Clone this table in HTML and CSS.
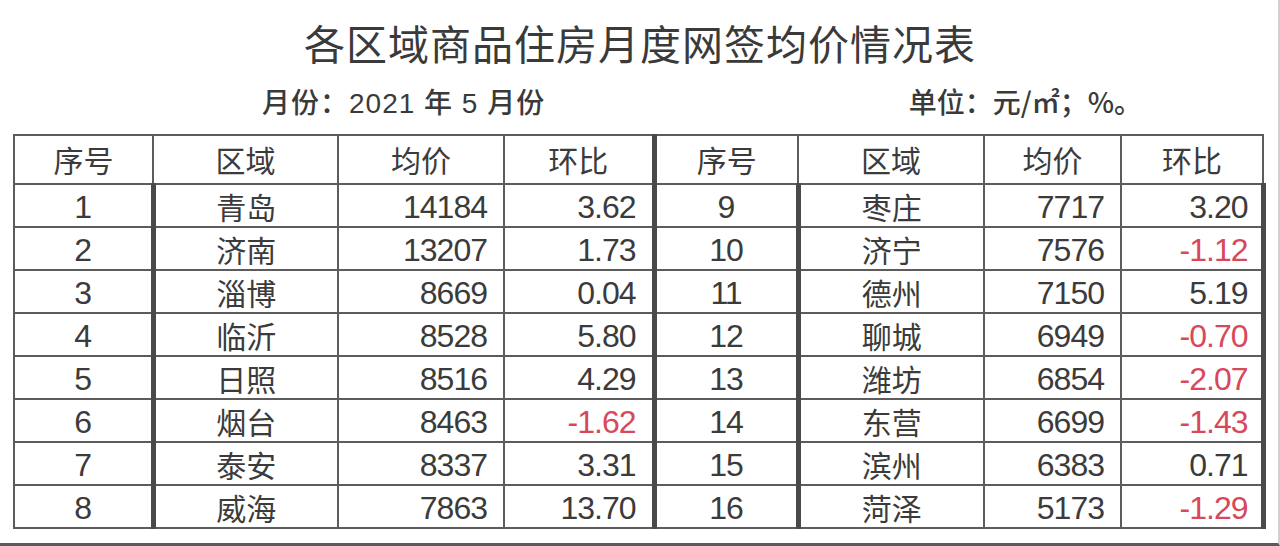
FILE: index.html
```html
<!DOCTYPE html>
<html lang="zh-CN">
<head>
<meta charset="utf-8">
<title>各区域商品住房月度网签均价情况表</title>
<link rel="stylesheet" href="styles.css">
</head>
<body>
<div class="page">
  <h1 class="title">各区域商品住房月度网签均价情况表</h1>
  <div class="meta">
    <span class="meta-left">月份：2021 年 5 月份</span>
    <span class="meta-right">单位：元/㎡；%。</span>
  </div>
  <table class="grid">
    <colgroup>
      <col class="c1"><col class="c2"><col class="c3"><col class="c4">
      <col class="c5"><col class="c6"><col class="c7"><col class="c8">
    </colgroup>
    <thead>
      <tr>
        <th>序号</th><th>区域</th><th>均价</th><th>环比</th>
        <th class="half">序号</th><th>区域</th><th>均价</th><th class="last">环比</th>
      </tr>
    </thead>
    <tbody>
      <tr><td class="no">1</td><td class="area">青岛</td><td class="num">14184</td><td class="num">3.62</td><td class="no half">9</td><td class="area">枣庄</td><td class="num">7717</td><td class="num last">3.20</td></tr>
      <tr><td class="no">2</td><td class="area">济南</td><td class="num">13207</td><td class="num">1.73</td><td class="no half">10</td><td class="area">济宁</td><td class="num">7576</td><td class="num last neg">-1.12</td></tr>
      <tr><td class="no">3</td><td class="area">淄博</td><td class="num">8669</td><td class="num">0.04</td><td class="no half">11</td><td class="area">德州</td><td class="num">7150</td><td class="num last">5.19</td></tr>
      <tr><td class="no">4</td><td class="area">临沂</td><td class="num">8528</td><td class="num">5.80</td><td class="no half">12</td><td class="area">聊城</td><td class="num">6949</td><td class="num last neg">-0.70</td></tr>
      <tr><td class="no">5</td><td class="area">日照</td><td class="num">8516</td><td class="num">4.29</td><td class="no half">13</td><td class="area">潍坊</td><td class="num">6854</td><td class="num last neg">-2.07</td></tr>
      <tr><td class="no">6</td><td class="area">烟台</td><td class="num">8463</td><td class="num neg">-1.62</td><td class="no half">14</td><td class="area">东营</td><td class="num">6699</td><td class="num last neg">-1.43</td></tr>
      <tr><td class="no">7</td><td class="area">泰安</td><td class="num">8337</td><td class="num">3.31</td><td class="no half">15</td><td class="area">滨州</td><td class="num">6383</td><td class="num last">0.71</td></tr>
      <tr><td class="no">8</td><td class="area">威海</td><td class="num">7863</td><td class="num">13.70</td><td class="no half">16</td><td class="area">菏泽</td><td class="num">5173</td><td class="num last neg">-1.29</td></tr>
    </tbody>
  </table>
</div>
</body>
</html>
```

FILE: styles.css
```css
html, body {
  margin: 0;
  padding: 0;
  background: #ffffff;
}

.page {
  box-sizing: border-box;
  width: 1280px;
  height: 546px;
  padding: 0 0 0 13px;
  border-right: 2px solid #d0d0d0;
  border-bottom: 3px solid #5a5a5a;
  color: #3b3b3b;
  font-family: "Noto Sans CJK SC", "Liberation Sans", sans-serif;
  overflow: hidden;
}

.title {
  margin: 0;
  padding: 16px 0 0 0;
  height: 52px;
  width: 1254px;
  text-align: center;
  font-size: 41px;
  line-height: 52px;
  font-weight: normal;
  color: #3a3a3a;
  letter-spacing: 1px;
}

.meta {
  display: flex;
  justify-content: space-between;
  height: 66px;
  align-items: center;
  font-size: 28px;
  color: #3a3a3a;
  font-weight: 500;
}

.meta-left {
  padding-left: 249px;
  font-family: "Liberation Sans", "Noto Sans CJK SC", sans-serif;
  letter-spacing: 1px;
}

.meta-right {
  padding-right: 136px;
}

.grid {
  border-collapse: collapse;
  table-layout: fixed;
  width: 1249px;
}

.c1 { width: 139px; }
.c2 { width: 185px; }
.c3 { width: 166px; }
.c4 { width: 150px; }
.c5 { width: 144px; }
.c6 { width: 186px; }
.c7 { width: 137px; }
.c8 { width: 142px; }

.grid th,
.grid td {
  border: 2px solid #5c5c5c;
  padding: 0;
  color: #3b3b3b;
}

.grid th {
  height: 45px;
  font-size: 30px;
  font-weight: normal;
  text-align: center;
  vertical-align: middle;
  line-height: 1;
  padding-top: 0;
  padding-bottom: 2px;
}

.grid td {
  height: 38px;
  line-height: 1;
  vertical-align: middle;
  padding-top: 3px;
}

.grid td.no {
  text-align: center;
  font-family: "Liberation Sans", sans-serif;
  font-size: 32px;
  letter-spacing: -1px;
}

.grid td.area {
  text-align: center;
  font-size: 30px;
  padding-top: 0;
  padding-bottom: 0;
  height: 41px;
  border-left: 5px solid #4a4a4a;
}

.grid td.num {
  text-align: right;
  padding-right: 16px;
  font-family: "Liberation Sans", sans-serif;
  font-size: 32px;
  letter-spacing: -1px;
}

.grid .half {
  border-left: 5px solid #4a4a4a;
}

.grid td.last {
  border-right: 5px solid #4a4a4a;
  padding-right: 13px;
}

.grid td.neg {
  color: #d8485a;
}
```
